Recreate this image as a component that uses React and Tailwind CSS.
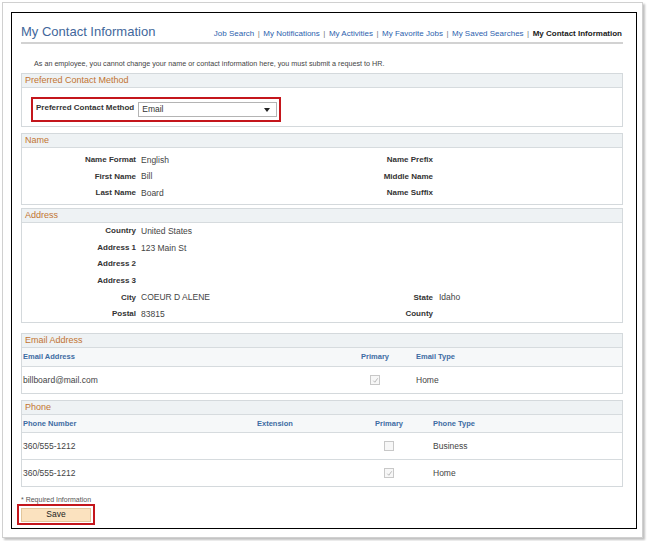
import React from "react";

const F = { fontFamily: '"Liberation Sans", Arial, sans-serif' };

function SectionHeader({ children }) {
  return (
    <div className="h-[14px] bg-[#eef2f4] border-b border-[#d6dbde] pl-[3px] text-[9px] leading-[13px] text-[#c27432]">
      {children}
    </div>
  );
}

function Section({ title, children, className = "" }) {
  return (
    <div className={"border border-[#d4d9dc] bg-white " + className}>
      <SectionHeader>{title}</SectionHeader>
      {children}
    </div>
  );
}

function Check({ checked }) {
  return (
    <span className="inline-flex items-center justify-center w-[10px] h-[10px] border border-[#c8c8c8] bg-[#f7f7f7] align-middle">
      {checked && (
        <svg width="7" height="7" viewBox="0 0 8 8">
          <path d="M1.5 4.2 L3.2 6 L6.5 1.5" fill="none" stroke="#a8a8a8" strokeWidth="0.9" />
        </svg>
      )}
    </span>
  );
}

function FieldRow({ l1, v1, l2, v2, h = "h-[16.5px]" }) {
  return (
    <div className={"grid grid-cols-[114px_164px_133px_1fr] items-center " + h}>
      <div className="text-right font-bold text-[8px] text-[#333]">{l1}</div>
      <div className="pl-[5px] text-[8.5px] text-[#444]">{v1}</div>
      <div className="text-right font-bold text-[8px] text-[#333]">{l2}</div>
      <div className="pl-[6px] text-[8.5px] text-[#444]">{v2}</div>
    </div>
  );
}

export default function App() {
  const links = ["Job Search", "My Notifications", "My Activities", "My Favorite Jobs", "My Saved Searches"];
  return (
    <div style={F} className="w-[648px] h-[541px] bg-white overflow-hidden">
      <div className="ml-[2px] mt-[2px] w-[641px] h-[536px] border border-[#d0d0d0] shadow-[2px_2px_2px_rgba(0,0,0,0.25)] bg-white pt-[9px] pl-[8px]">
        <div className="w-[626px] h-[517px] border border-black bg-white pl-[9px] pr-[13px]">
          {/* Title bar */}
          <div className="flex items-end justify-between h-[31px] border-b-2 border-[#d2d2d2] pb-[2px]">
            <div className="text-[13px] leading-[16px] text-[#42679b]">My Contact Information</div>
            <div className="flex items-center text-[8px] leading-[12px] pr-[1px]">
              {links.map((l) => (
                <React.Fragment key={l}>
                  <span className="text-[#2d5fae]">{l}</span>
                  <span className="text-[#777] mx-[3.5px]">|</span>
                </React.Fragment>
              ))}
              <span className="font-bold text-[#1a1a1a]">My Contact Information</span>
            </div>
          </div>

          <div className="mt-[14px] pl-[13px] text-[7.2px] leading-[12px] text-[#444]">
            As an employee, you cannot change your name or contact information here, you must submit a request to HR.
          </div>

          {/* Preferred */}
          <Section title="Preferred Contact Method" className="mt-[3px] h-[54px]">
            <div className="pt-[9px] pl-[9px]">
              <div className="w-[250px] h-[25px] border-2 border-[#c4161c] flex items-center pl-[3px]">
                <span className="font-bold text-[8px] text-[#333] mr-[4px] -mt-[3px]">Preferred Contact Method</span>
                <div className="w-[139px] h-[15px] border border-[#b4b4b4] bg-white flex items-center justify-between pl-[3px] pr-[6px]">
                  <span className="text-[8.5px] text-[#333]">Email</span>
                  <svg width="6" height="4" viewBox="0 0 6 4">
                    <path d="M0 0 L6 0 L3 4 Z" fill="#222" />
                  </svg>
                </div>
              </div>
            </div>
          </Section>

          {/* Name */}
          <Section title="Name" className="mt-[6px] h-[72px]">
            <div className="pt-[4px]">
              <FieldRow l1="Name Format" v1="English" l2="Name Prefix" v2="" />
              <FieldRow l1="First Name" v1="Bill" l2="Middle Name" v2="" />
              <FieldRow l1="Last Name" v1="Board" l2="Name Suffix" v2="" />
            </div>
          </Section>

          {/* Address */}
          <Section title="Address" className="mt-[3px] h-[115px]">
            <div>
              <FieldRow l1="Country" v1="United States" l2="" v2="" h="h-[16.6px]" />
              <FieldRow l1="Address 1" v1="123 Main St" l2="" v2="" h="h-[16.6px]" />
              <FieldRow l1="Address 2" v1="" l2="" v2="" h="h-[16.6px]" />
              <FieldRow l1="Address 3" v1="" l2="" v2="" h="h-[16.6px]" />
              <FieldRow l1="City" v1="COEUR D ALENE" l2="State" v2="Idaho" h="h-[16.6px]" />
              <FieldRow l1="Postal" v1="83815" l2="County" v2="" h="h-[16.6px]" />
            </div>
          </Section>

          {/* Email */}
          <Section title="Email Address" className="mt-[10px]">
            <div className="flex items-center h-[19px] bg-[#f6f8f9] border-b border-[#d6dbde] text-[7.5px] font-bold text-[#3d6ca3]">
              <div className="w-[333px] pl-[1px]">Email Address</div>
              <div className="w-[40px] text-center">Primary</div>
              <div className="w-[21px]" />
              <div>Email Type</div>
            </div>
            <div className="flex items-center h-[26px] text-[8.5px] text-[#444]">
              <div className="w-[333px] pl-[1px]">billboard@mail.com</div>
              <div className="w-[40px] flex justify-center"><Check checked /></div>
              <div className="w-[21px]" />
              <div>Home</div>
            </div>
          </Section>

          {/* Phone */}
          <Section title="Phone" className="mt-[6px]">
            <div className="flex items-center h-[18px] bg-[#f6f8f9] border-b border-[#d6dbde] text-[7.5px] font-bold text-[#3d6ca3]">
              <div className="w-[235px] pl-[1px]">Phone Number</div>
              <div className="w-[112px]">Extension</div>
              <div className="w-[40px] text-center">Primary</div>
              <div className="w-[24px]" />
              <div>Phone Type</div>
            </div>
            <div className="flex items-center h-[27px] border-b border-[#d6dbde] text-[8.5px] text-[#444]">
              <div className="w-[235px] pl-[1px]">360/555-1212</div>
              <div className="w-[112px]" />
              <div className="w-[40px] flex justify-center"><Check /></div>
              <div className="w-[24px]" />
              <div>Business</div>
            </div>
            <div className="flex items-center h-[26px] text-[8.5px] text-[#444]">
              <div className="w-[235px] pl-[1px]">360/555-1212</div>
              <div className="w-[112px]" />
              <div className="w-[40px] flex justify-center"><Check checked /></div>
              <div className="w-[24px]" />
              <div>Home</div>
            </div>
          </Section>

          <div className="mt-[8px] text-[7px] leading-[9px] text-[#555]">* Required Information</div>
          <div className="-ml-[4px] w-[78px] h-[21px] border-2 border-[#c4161c] flex items-center justify-center">
            <div className="w-[70px] h-[14px] bg-[#fbe2bf] border border-[#e2c79c] flex items-center justify-center text-[8.5px] text-[#222]">
              Save
            </div>
          </div>
        </div>
      </div>
    </div>
  );
}
